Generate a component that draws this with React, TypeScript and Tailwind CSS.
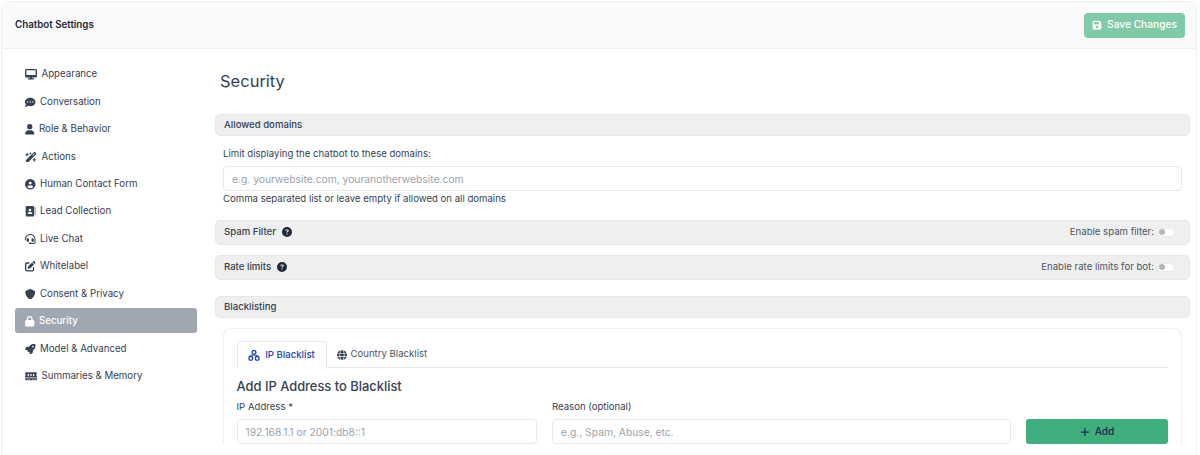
import React from "react";
import { FaDesktop, FaCommentDots, FaUser, FaWandMagicSparkles, FaCircleUser, FaAddressBook, FaHeadset, FaPenToSquare, FaShield, FaLock, FaRocket, FaMemory, FaFloppyDisk, FaCircleQuestion, FaGlobe, FaPlus } from "react-icons/fa6";

const nav = [
  { label: "Appearance", icon: FaDesktop, width: "w-[12px]", active: false },
  { label: "Conversation", icon: FaCommentDots, width: "w-[10.5px]", active: false },
  { label: "Role & Behavior", icon: FaUser, width: "w-[9.5px]", active: false },
  { label: "Actions", icon: FaWandMagicSparkles, width: "w-[12px]", active: false },
  { label: "Human Contact Form", icon: FaCircleUser, width: "w-[10.5px]", active: false },
  { label: "Lead Collection", icon: FaAddressBook, width: "w-[10.5px]", active: false },
  { label: "Live Chat", icon: FaHeadset, width: "w-[10.5px]", active: false },
  { label: "Whitelabel", icon: FaPenToSquare, width: "w-[10.5px]", active: false },
  { label: "Consent & Privacy", icon: FaShield, width: "w-[10.5px]", active: false },
  { label: "Security", icon: FaLock, width: "w-[9.5px]", active: true },
  { label: "Model & Advanced", icon: FaRocket, width: "w-[10.5px]", active: false },
  { label: "Summaries & Memory", icon: FaMemory, width: "w-[12px]", active: false },
];

function Bar({ className, children }: { className: string; children: React.ReactNode }) {
  return (
    <div className={`flex items-center justify-between rounded-[5px] border border-[#e6e7e9] bg-[#efefef] pl-2 pr-[14px] text-[9.6px] font-medium text-[#374151] ${className}`}>
      {children}
    </div>
  );
}

function Toggle() {
  return (
    <span className="ml-[3px] flex h-[9px] w-[18px] items-center rounded-full border border-[#e8e8ea] bg-white pl-[1px]">
      <span className="h-[6px] w-[6px] rounded-full bg-[#b3b5ba]" />
    </span>
  );
}

function NodesIcon() {
  return (
    <svg viewBox="0 0 12 11" className="h-[11px] w-[12px]" fill="none" stroke="currentColor">
      <rect x="4.2" y="0.7" width="3.6" height="3.4" rx="1.1" strokeWidth="1.3" />
      <rect x="1" y="6.5" width="3.6" height="3.6" rx="1.2" strokeWidth="1.3" />
      <rect x="7.4" y="6.5" width="3.6" height="3.6" rx="1.2" strokeWidth="1.3" />
      <path d="M2.8 6.5V5.2h6.4v1.3" strokeWidth="0.9" />
    </svg>
  );
}

const inputClass = "block h-[25px] w-full rounded-[4px] border border-[#e5e7eb] px-2 text-[10.3px] placeholder:text-[#9ca3af]";

export default function App() {
  return (
    <div className="h-[455px] overflow-hidden bg-white font-['Inter',sans-serif]">
      <div className="ml-[1px] mt-[1px] h-[454px] w-[1196px] rounded-t-[8px] border border-b-0 border-[#eeeff1]">
        <header className="flex h-[47px] items-center justify-between border-b border-[#eeeff1] bg-[#f9fafb] pl-[13px] pr-[11px]">
          <h1 className="text-[9.75px] font-semibold text-[#1f2937]">Chatbot Settings</h1>
          <button className="flex h-[25px] w-[101px] items-center justify-center gap-[5px] rounded-[4px] bg-[#80caa7] text-[10.2px] font-medium text-white">
            <FaFloppyDisk className="text-[10px]" />
            Save Changes
          </button>
        </header>
        <div className="flex">
          <nav className="flex w-[195px] shrink-0 flex-col gap-[2.45px] pl-[13px] pt-[12px]">
            {nav.map((item) => {
              const Icon = item.icon;
              return (
                <div
                  key={item.label}
                  className={`flex h-[25px] w-[182px] items-center gap-[4.5px] rounded-[3px] pl-[10px] pt-[2px] text-[9.7px] ${item.active ? "bg-[#a0a7b2] font-medium text-white" : "text-[#374151]"}`}
                >
                  <Icon className={`h-[10.5px] ${item.width}`} />
                  {item.label}
                </div>
              );
            })}
          </nav>
          <main className="min-w-0 flex-1 pl-[18px] pr-[6px]">
            <h2 className="pl-[5px] pt-[21px] text-[16.5px] leading-[22px] text-[#374151]">Security</h2>
            <Bar className="mt-[22px] h-[22px]">Allowed domains</Bar>
            <div className="px-2 pt-[11px]">
              <label className="block text-[9.6px] leading-[14px] text-[#374151]">Limit displaying the chatbot to these domains:</label>
              <input readOnly placeholder="e.g. yourwebsite.com, youranotherwebsite.com" className={`mt-[5px] ${inputClass}`} />
              <p className="pt-[1px] text-[9.6px] leading-[14px] text-[#374151]">Comma separated list or leave empty if allowed on all domains</p>
            </div>
            <Bar className="mt-[14px] h-[25px]">
              <span className="flex items-center gap-[6px]">Spam Filter <FaCircleQuestion className="text-[10px] text-[#1f2937]" /></span>
              <span className="flex items-center font-normal text-[#4b5563]">Enable spam filter:<Toggle /></span>
            </Bar>
            <Bar className="mt-[10px] h-[25px]">
              <span className="flex items-center gap-[6px]">Rate limits <FaCircleQuestion className="text-[10px] text-[#1f2937]" /></span>
              <span className="flex items-center font-normal text-[#4b5563]">Enable rate limits for bot:<Toggle /></span>
            </Bar>
            <Bar className="mt-[16px] h-[22px]">Blacklisting</Bar>
            <section className="ml-2 mr-2 mt-[10px] rounded-t-[8px] border border-b-0 border-[#eeeff1] pl-[12.5px] pr-[13px] pt-[12px]">
              <div className="flex h-[27px] border-b border-[#e5e7eb] text-[9.6px]">
                <div className="-mb-px flex h-[27px] w-[90px] items-center justify-center gap-[5px] rounded-t-[4px] border border-b-0 border-[#e5e7eb] bg-white pt-[1px] font-medium text-[#1e40af]">
                  <NodesIcon /> IP Blacklist
                </div>
                <div className="flex items-center gap-[4px] px-[10px] pt-[1px] text-[#4b5563]">
                  <FaGlobe className="text-[10px] text-[#374151]" /> Country Blacklist
                </div>
              </div>
              <h3 className="pt-[10px] text-[12.9px] font-medium leading-[18px] text-[#374151]">Add IP Address to Blacklist</h3>
              <div className="flex items-end gap-[15px] pt-[4px]">
                <label className="w-[300.5px] text-[9.6px] leading-[14px] text-[#374151]">
                  IP Address *
                  <input readOnly placeholder="192.168.1.1 or 2001:db8::1" className={`mt-[5px] ${inputClass}`} />
                </label>
                <label className="w-[459px] text-[9.6px] leading-[14px] text-[#374151]">
                  Reason (optional)
                  <input readOnly placeholder="e.g., Spam, Abuse, etc." className={`mt-[5px] ${inputClass}`} />
                </label>
                <button className="flex h-[25px] w-[142px] items-center justify-center gap-[5px] rounded-[3px] bg-[#3eaf7c] text-[10.2px] font-medium text-[#1e2a4a]">
                  <FaPlus className="text-[10px]" /> Add
                </button>
              </div>
            </section>
          </main>
        </div>
      </div>
    </div>
  );
}
